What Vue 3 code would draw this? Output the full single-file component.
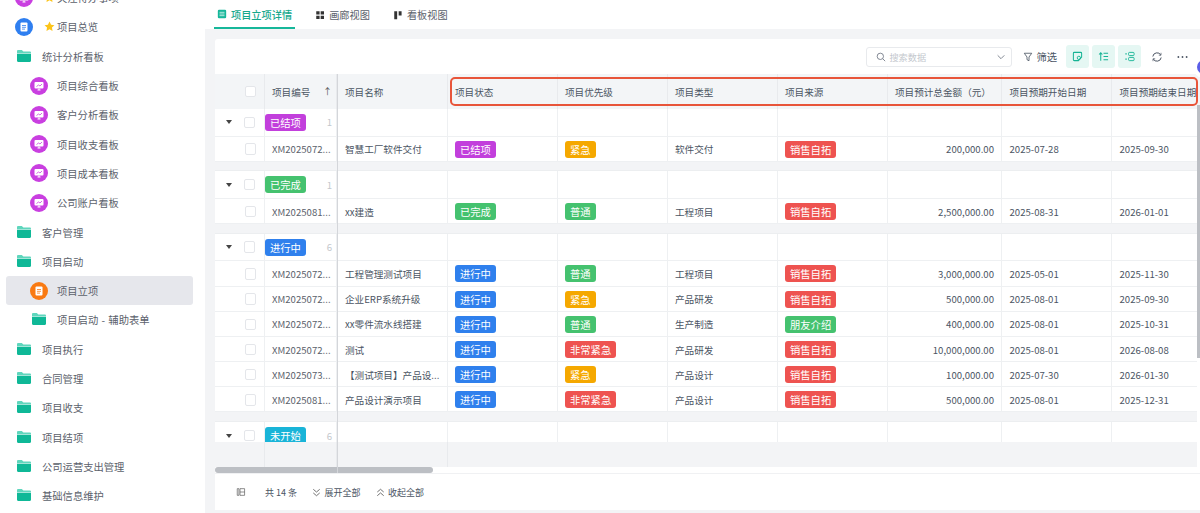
<script setup>
const nav = [
  { t: '关注待办事项', icon: 'board', star: true, lv: 0 },
  { t: '项目总览', icon: 'blue', star: true, lv: 0 },
  { t: '统计分析看板', icon: 'folder', lv: 0 },
  { t: '项目综合看板', icon: 'board', lv: 1 },
  { t: '客户分析看板', icon: 'board', lv: 1 },
  { t: '项目收支看板', icon: 'board', lv: 1 },
  { t: '项目成本看板', icon: 'board', lv: 1 },
  { t: '公司账户看板', icon: 'board', lv: 1 },
  { t: '客户管理', icon: 'folder', lv: 0 },
  { t: '项目启动', icon: 'folder', lv: 0 },
  { t: '项目立项', icon: 'orange', lv: 1, active: true },
  { t: '项目启动 - 辅助表单', icon: 'folder', lv: 1 },
  { t: '项目执行', icon: 'folder', lv: 0 },
  { t: '合同管理', icon: 'folder', lv: 0 },
  { t: '项目收支', icon: 'folder', lv: 0 },
  { t: '项目结项', icon: 'folder', lv: 0 },
  { t: '公司运营支出管理', icon: 'folder', lv: 0 },
  { t: '基础信息维护', icon: 'folder', lv: 0 }
]
const heads = ['项目状态', '项目优先级', '项目类型', '项目来源', '项目预计总金额（元）', '项目预期开始日期', '项目预期结束日期']
const colors = {
  '已结项': '#c23fdc', '已完成': '#45c26f', '进行中': '#2f80ed', '未开始': '#19b4d8',
  '紧急': '#f5a800', '普通': '#45c26f', '非常紧急': '#ee5350', '销售自拓': '#ee5350', '朋友介绍': '#45c26f'
}
const groups = [
  { name: '已结项', n: 1, rows: [
    ['XM2025072...', '智慧工厂软件交付', '已结项', '紧急', '软件交付', '销售自拓', '200,000.00', '2025-07-28', '2025-09-30']
  ] },
  { name: '已完成', n: 1, rows: [
    ['XM2025081...', 'xx建造', '已完成', '普通', '工程项目', '销售自拓', '2,500,000.00', '2025-08-31', '2026-01-01']
  ] },
  { name: '进行中', n: 6, rows: [
    ['XM2025072...', '工程管理测试项目', '进行中', '普通', '工程项目', '销售自拓', '3,000,000.00', '2025-05-01', '2025-11-30'],
    ['XM2025072...', '企业ERP系统升级', '进行中', '紧急', '产品研发', '销售自拓', '500,000.00', '2025-08-01', '2025-09-30'],
    ['XM2025072...', 'xx零件流水线搭建', '进行中', '普通', '生产制造', '朋友介绍', '400,000.00', '2025-08-01', '2025-10-31'],
    ['XM2025072...', '测试', '进行中', '非常紧急', '产品研发', '销售自拓', '10,000,000.00', '2025-08-01', '2026-08-08'],
    ['XM2025073...', '【测试项目】产品设...', '进行中', '紧急', '产品设计', '销售自拓', '100,000.00', '2025-07-30', '2026-01-30'],
    ['XM2025081...', '产品设计演示项目', '进行中', '非常紧急', '产品设计', '销售自拓', '500,000.00', '2025-08-01', '2025-12-31']
  ] }
]
</script>

<template>
  <div class="page">
    <aside class="side">
      <div class="nav">
        <div v-for="item in nav" :key="item.t" class="nav-row" :class="['lv' + item.lv, { active: item.active }]">
          <svg v-if="item.icon === 'folder'" class="ic folder" viewBox="0 0 16 14">
            <path d="M1 2.200C1 1.500 1.500 1 2.200 1h3.600l1.600 1.600h6.400c.7 0 1.200.5 1.200 1.200v.4H1z" fill="#5fd6bd" />
            <path d="M1 4.800h14v7c0 .7-.5 1.200-1.200 1.200H2.200C1.500 13 1 12.500 1 11.800z" fill="#0fb897" />
          </svg>
          <svg v-else class="ic round" viewBox="0 0 18 18">
            <circle cx="9" cy="9" r="9" :fill="item.icon === 'blue' ? '#2f7ff0' : item.icon === 'orange' ? '#f97a12' : '#c93fe0'" />
            <template v-if="item.icon === 'board'">
              <rect x="4.500" y="5" width="9" height="6.500" rx="1" fill="#fff" />
              <path d="M7.500 13h3M9 11.500V13" stroke="#fff" stroke-width="1" />
              <path d="M6.500 9.500l2-1.500 1.500 1 2-2" stroke="#c93fe0" stroke-width=".8" fill="none" />
            </template>
            <template v-else>
              <rect x="5.500" y="4.500" width="7" height="9" rx="1" fill="#fff" />
              <path d="M7 7.500h4M7 9.300h4M7 11.100h3" :stroke="item.icon === 'blue' ? '#2f7ff0' : '#f97a12'" stroke-width=".8" />
            </template>
          </svg>
          <svg v-if="item.star" class="star" viewBox="0 0 12 12">
            <path d="M6 .6l1.700 3.400 3.700.5-2.700 2.600.6 3.700L6 9.100l-3.300 1.700.6-3.700L.6 4.500l3.700-.5z" fill="#fcc419" />
          </svg>
          <span>{{ item.t }}</span>
        </div>
      </div>
    </aside>

    <main class="main">
      <nav class="tabs">
        <div class="tab on">
          <svg viewBox="0 0 12 12" class="tab-ic"><rect x="1" y="1" width="10" height="10" rx="1.500" fill="#16b79a" /><path d="M3 4h6M3 6h6M3 8h6" stroke="#fff" stroke-width=".8" /></svg>
          项目立项详情
        </div>
        <div class="tab">
          <svg viewBox="0 0 12 12" class="tab-ic"><path d="M1.500 1.500h4v4h-4zM6.800 1.500h4v4h-4zM1.500 6.800h4v4h-4zM6.800 6.800h4v4h-4z" fill="#333" /></svg>
          画廊视图
        </div>
        <div class="tab">
          <svg viewBox="0 0 12 12" class="tab-ic"><path d="M1.500 1.500h3.500v9.500H1.500zM6.800 1.500h3.500v5H6.800z" fill="#333" /></svg>
          看板视图
        </div>
      </nav>

      <section class="card">
        <div class="toolbar">
          <div class="search">
            <svg viewBox="0 0 12 12" class="s-ic"><circle cx="5.200" cy="5.200" r="3.800" fill="none" stroke="#6b7280" /><path d="M8 8l3 3" stroke="#6b7280" /></svg>
            <span class="ph">搜索数据</span>
            <svg viewBox="0 0 12 12" class="s-arrow"><path d="M2 4l4 4 4-4" fill="none" stroke="#6b7280" /></svg>
          </div>
          <div class="filter">
            <svg viewBox="0 0 12 12" class="f-ic"><path d="M1.500 1.500h9L7.200 6v4.500l-2.400-1.300V6z" fill="none" stroke="#4b5563" /></svg>
            筛选
          </div>
          <div class="tbtn">
            <svg viewBox="0 0 12 12"><path d="M2.500 1.500h7c.6 0 1 .4 1 1v4l-3.500 4h-4.500c-.6 0-1-.4-1-1v-7c0-.6.4-1 1-1z" fill="none" stroke="#15b394" stroke-width="1.100" /><circle cx="7.500" cy="7.500" r="1.800" fill="none" stroke="#15b394" /></svg>
          </div>
          <div class="tbtn">
            <svg viewBox="0 0 12 12"><path d="M3 10.500V2M1.200 3.800L3 2l1.800 1.800M6 2.500h5M6 6h5M6 9.500h5" fill="none" stroke="#15b394" stroke-width="1.100" /></svg>
          </div>
          <div class="tbtn">
            <svg viewBox="0 0 12 12"><rect x="5" y="1.500" width="6" height="3.500" rx="1" fill="none" stroke="#15b394" /><rect x="5" y="7" width="6" height="3.500" rx="1" fill="none" stroke="#15b394" /><path d="M1.500 3.200h1.500M1.500 8.800h1.500" stroke="#15b394" stroke-width="1.500" /></svg>
          </div>
          <svg viewBox="0 0 12 12" class="plain"><path d="M1.800 5.500A4.300 4.300 0 0 1 9.800 4M10.200 6.500A4.300 4.300 0 0 1 2.200 8" fill="none" stroke="#4b5563" /><path d="M10 1.800V4.200H7.800M2 10.200V7.800h2.200" fill="none" stroke="#4b5563" stroke-width=".7" /></svg>
          <svg viewBox="0 0 12 4" class="more"><circle cx="1.500" cy="2" r="1" fill="#4b5563" /><circle cx="6" cy="2" r="1" fill="#4b5563" /><circle cx="10.500" cy="2" r="1" fill="#4b5563" /></svg>
        </div>

        <div class="table">
          <div class="hrow row">
            <div class="c c0"><i class="cb head-cb"></i></div>
            <div class="c c1 hcode"><span>项目编号</span><b class="arrow">↑</b></div>
            <div class="c c2">项目名称</div>
            <div v-for="(h, i) in heads" :key="h" class="c" :class="'col' + i">{{ h }}</div>
          </div>

          <div v-for="g in groups" :key="g.name" class="group">
            <div class="row grow">
              <div class="c c0">
                <span class="tri"></span><i class="cb"></i>
              </div>
              <div class="c c1 gcell">
                <span class="tag gtag" :style="{ background: colors[g.name] }">{{ g.name }}</span>
                <span class="cnt">{{ g.n }}</span>
              </div>
              <div class="c c2"></div>
              <div v-for="(h, i) in heads" :key="h" class="c" :class="'col' + i"></div>
            </div>
            <div v-for="(r, ri) in g.rows" :key="ri" class="row drow">
              <div class="c c0"><i class="cb"></i></div>
              <div class="c c1 code">{{ r[0] }}</div>
              <div class="c c2">{{ r[1] }}</div>
              <div class="c col0"><span class="tag" :style="{ background: colors[r[2]] }">{{ r[2] }}</span></div>
              <div class="c col1"><span class="tag" :style="{ background: colors[r[3]] }">{{ r[3] }}</span></div>
              <div class="c col2">{{ r[4] }}</div>
              <div class="c col3"><span class="tag" :style="{ background: colors[r[5]] }">{{ r[5] }}</span></div>
              <div class="c col4 num">{{ r[6] }}</div>
              <div class="c col5">{{ r[7] }}</div>
              <div class="c col6">{{ r[8] }}</div>
            </div>
            <div class="gap"></div>
          </div>

          <div class="row grow clipped">
            <div class="c c0"><span class="tri"></span><i class="cb"></i></div>
            <div class="c c1 gcell">
              <span class="tag gtag" :style="{ background: colors['未开始'] }">未开始</span>
              <span class="cnt">6</span>
            </div>
            <div class="c c2"></div>
            <div v-for="(h, i) in heads" :key="h" class="c" :class="'col' + i"></div>
          </div>
          <div class="row blank">
            <div class="c c0"></div>
            <div class="c c1"></div>
            <div class="c c2"></div>
          </div>

          <div class="hscroll"><div class="thumb"></div></div>
          <div class="red"></div>
          <div class="fixed-line"></div>
          <div class="vtrack"><div class="vbar"></div></div>
        </div>

        <footer class="foot">
          <svg viewBox="0 0 12 12" class="foot-ic"><path d="M1.500 2h2v8h-2zM4.800 2h5.500v8H4.800zM4.800 6h5.500" fill="none" stroke="#555" stroke-width=".8" /></svg>
          <span class="total">共 14 条</span>
          <span class="act">
            <svg viewBox="0 0 12 12"><path d="M2.500 2.500L6 5.500l3.500-3M2.500 6.500L6 9.500l3.500-3" fill="none" stroke="#555" stroke-width=".9" /></svg>
            展开全部
          </span>
          <span class="act">
            <svg viewBox="0 0 12 12"><path d="M2.500 5.500L6 2.500l3.500 3M2.500 9.500L6 6.500l3.500 3" fill="none" stroke="#555" stroke-width=".9" /></svg>
            收起全部
          </span>
        </footer>
      </section>

      <div class="float"><span></span></div>
    </main>
  </div>
</template>

<style>
html, body { margin: 0; background: #fff; overflow: hidden; }
</style>

<style scoped>
.page {
  display: flex;
  width: 1200px;
  height: 513px;
  overflow: hidden;
  font-family: "Noto Sans CJK SC", "Noto Sans", sans-serif;
  color: #4b5563;
}
.side {
  width: 205px;
  flex: none;
  background: #fff;
  overflow: hidden;
}
.nav { margin-top: -17px; padding-right: 12px; }
.nav-row {
  height: 29.3px;
  display: flex;
  align-items: center;
  font-size: 10.3px;
  word-spacing: 1px;
  color: #5b616b;
  border-radius: 3px;
  margin-left: 6px;
}
.nav-row.lv0 { padding-left: 8px; }
.nav-row.lv1 { padding-left: 23px; }
.nav-row.active { background: #e6e7ec; }
.ic.round { width: 18px; height: 18px; flex: none; margin-left: .5px; margin-right: 9.500px; }
.lv0 .ic.round { margin-left: .7px; margin-right: 11.600px; }
.ic.folder { width: 16px; height: 14px; flex: none; margin-left: 1.500px; margin-right: 10.500px; margin-top: -1px; }
.star { width: 11px; height: 11px; margin-right: 1.700px; flex: none; }

.main {
  flex: 1;
  min-width: 0;
  background: #f3f4f6;
  display: flex;
  flex-direction: column;
  position: relative;
}
.tabs {
  height: 29px;
  background: #fff;
  display: flex;
  padding-left: 9px;
  gap: 17px;
  flex: none;
}
.tab {
  display: flex;
  align-items: center;
  gap: 4px;
  height: 29px;
  box-sizing: border-box;
  font-size: 10.2px;
  color: #5b616b;
  padding: 0 3px;
}
.tab.on {
  color: #16a88c;
  font-weight: 500;
  border-bottom: 2px solid #16b79a;
  padding-top: 1px;
}
.tab-ic { width: 10px; height: 10px; }

.card {
  margin: 10px 0 3px 10px;
  background: #fff;
  border-radius: 3px 0 0 0;
  flex: 1;
  min-height: 0;
  display: flex;
  flex-direction: column;
}
.toolbar {
  height: 35px;
  flex: none;
  display: flex;
  align-items: center;
  justify-content: flex-end;
  padding-right: 12px;
  box-sizing: border-box;
}
.search {
  width: 146px;
  height: 20px;
  border: 1px solid #e8eaed;
  border-radius: 3px;
  display: flex;
  align-items: center;
  padding: 0 5px 0 9px;
  box-sizing: border-box;
}
.s-ic { width: 10px; height: 10px; margin-right: 3px; }
.ph { color: #c4c8ce; font-size: 9.200px; flex: 1; }
.s-arrow { width: 10px; height: 10px; }
.filter {
  display: flex;
  align-items: center;
  gap: 3px;
  font-size: 10.300px;
  margin: 0 9px 0 11px;
}
.f-ic { width: 10px; height: 10px; }
.tbtn {
  width: 23px;
  height: 23px;
  border-radius: 3px;
  background: #e5f7f3;
  display: flex;
  align-items: center;
  justify-content: center;
  margin-right: 3px;
}
.tbtn svg { width: 11px; height: 11px; }
.plain { width: 12px; height: 12px; margin-left: 6.500px; }
.more { width: 11px; height: 4px; margin-left: 14.500px; }

.table {
  position: relative;
  height: 399px;
  flex: none;
  overflow: hidden;
  font-size: 9.600px;
}
.row { display: flex; }
.c {
  flex: none;
  box-sizing: border-box;
  height: 100%;
  display: flex;
  align-items: center;
  padding-left: 8px;
  border-right: 1px solid #eef0f2;
  white-space: nowrap;
}
.c0 { width: 50px; padding-left: 13px; }
.c1 { width: 72px; padding-left: 7px; }
.c2 { width: 111px; padding-left: 8px; }
.col0, .col1, .col2, .col3 { width: 110px; padding-left: 7px; }
.col4 { width: 114px; padding-left: 7px; }
.col5, .col6 { width: 110px; padding-left: 7.500px; }
.hrow {
  height: 35px;
  background: #f3f5f7;
}
.hrow .c { border-right-color: #e8eaed; }
.hcode { justify-content: space-between; padding-right: 4px; }
.arrow { font-weight: 400; font-size: 9px; color: #555; }
.cb {
  width: 11.500px;
  height: 11.500px;
  box-sizing: border-box;
  border: 1px solid #e4e6ea;
  border-radius: 2px;
  background: #fff;
  display: block;
  margin-left: 16.500px;
}
.grow { height: 27.600px; border-bottom: 1px solid #eef0f2; box-sizing: border-box; }
.grow .c0 { padding-left: 11px; }
.grow .cb { margin-left: 11.500px; }
.tri {
  width: 0;
  height: 0;
  border-left: 3.500px solid transparent;
  border-right: 3.500px solid transparent;
  border-top: 4px solid #444;
}
.gcell { padding-left: 0; justify-content: space-between; padding-right: 4px; }
.cnt { color: #c3c7cc; font-size: 9.600px; }
.drow { height: 25.200px; box-shadow: inset 0 -1px 0 #eef0f2; }
.code { color: #5b616b; }
.num { justify-content: flex-end; padding-right: 7px; }
.tag {
  display: inline-block;
  height: 17px;
  line-height: 17px;
  padding: 0 5px;
  border-radius: 3px;
  color: #fff;
  font-size: 10.300px;
}
.gap { height: 9.600px; background: #f3f4f6; border-bottom: 1px solid #eceef0; box-sizing: border-box; }
.clipped { height: 20px; overflow: hidden; border-bottom: 0; align-items: flex-start; }
.clipped .c { height: 27px; }
.blank { height: 25px; background: #f3f4f6; }
.blank .c { border-right-color: #e8eaed; }
.hscroll { height: 6px; background: #fff; }
.thumb { width: 218px; height: 6px; border-radius: 3px; background: #bcbfc4; }
.red {
  position: absolute;
  left: 235px;
  top: 3px;
  width: 743.500px;
  height: 25px;
  border: 2px solid #e8553a;
  border-radius: 5px;
  pointer-events: none;
}
.fixed-line {
  position: absolute;
  left: 121.500px;
  top: 0;
  width: 1.500px;
  height: 399px;
  background: #d4d6da;
}
.vtrack {
  position: absolute;
  right: 0;
  top: 31px;
  width: 3px;
  height: 362px;
  background: #fff;
}
.vbar { height: 253px; background: #bcbfc4; }
.foot {
  flex: 1;
  display: flex;
  align-items: center;
  padding-left: 21px;
  font-size: 9px;
  border-top: 1px solid #f0f1f3;
}
.foot-ic { width: 10px; height: 10px; margin-right: 19px; }
.total { margin-right: 14px; width: 32px; white-space: nowrap; }
.act { display: flex; align-items: center; gap: 2.500px; margin-right: 14px; white-space: nowrap; }
.act svg { width: 11px; height: 11px; }
.float {
  position: absolute;
  right: -15px;
  top: 56px;
  width: 22px;
  height: 22px;
  border-radius: 50%;
  background: #fff;
  display: flex;
  align-items: center;
  justify-content: center;
}
.float span { width: 14px; height: 14px; border-radius: 50%; background: #5a5ee8; }
</style>
